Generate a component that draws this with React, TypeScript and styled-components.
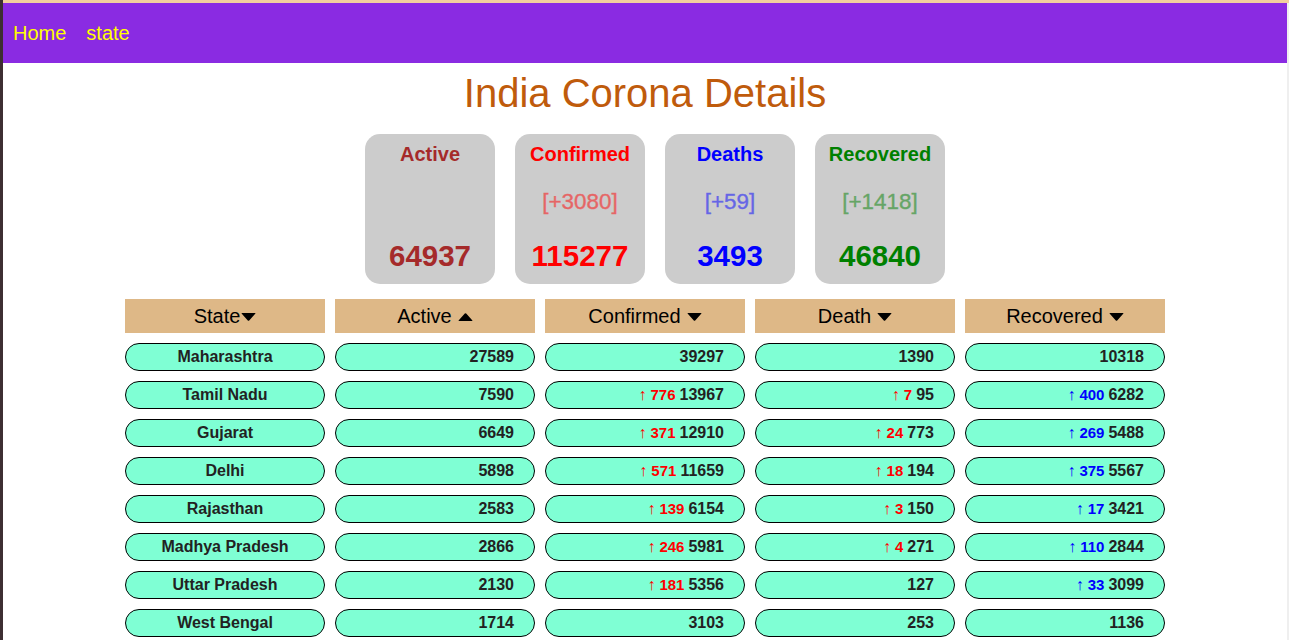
import React from "react";
import styled, { createGlobalStyle } from "styled-components";

const GlobalStyle = createGlobalStyle`
  html, body {
    margin: 0;
    padding: 0;
    overflow: hidden;
    background: #fff;
  }
  body {
    font-family: "Liberation Sans", Arial, sans-serif;
  }
`;

const Frame = styled.div`
  display: flex;
  height: 100vh;
`;

const LeftEdge = styled.div`
  width: 3px;
  background: #3d2e32;
`;

const Window = styled.div`
  flex: 1;
  display: flex;
  flex-direction: column;
`;

const TopEdge = styled.div`
  height: 3px;
  background: #f2cf9e;
`;

const WindowBody = styled.div`
  flex: 1;
  display: flex;
  min-height: 0;
`;

const RightEdge = styled.div`
  width: 2px;
  background: #efefef;
`;

const Main = styled.div`
  flex: 1;
  min-width: 0;
`;

const Nav = styled.nav`
  height: 60px;
  background: #8a2be2;
  display: flex;
  align-items: center;
  gap: 20px;
  padding-left: 10px;
`;

const NavLink = styled.a`
  color: #ffff00;
  font-size: 20px;
  text-decoration: none;
  cursor: pointer;
`;

const Title = styled.h1`
  margin: 0;
  text-align: center;
  font-size: 40px;
  font-weight: normal;
  line-height: 60px;
  color: #bf5b0c;
`;

const CardRow = styled.div`
  display: flex;
  justify-content: center;
  padding-top: 11px;
`;

const Card = styled.div`
  width: 130px;
  height: 150px;
  margin-left: 20px;
  box-sizing: border-box;
  background: #cccccc;
  border-radius: 15px;
  padding-top: 8px;
  display: flex;
  flex-direction: column;
  align-items: center;
  color: ${(p: { $color: string }) => p.$color};
`;

const CardTitle = styled.div`
  font-size: 20px;
  font-weight: bold;
  line-height: 24px;
`;

const CardDelta = styled.div`
  margin-top: 24px;
  height: 24px;
  font-size: 22.4px;
  line-height: 24px;
  opacity: 0.5;
  -webkit-text-stroke: 0.4px currentColor;
`;

const CardNumber = styled.div`
  margin-top: 25px;
  font-size: 29.5px;
  font-weight: bold;
  line-height: 34px;
`;

const Table = styled.div`
  display: grid;
  grid-template-columns: repeat(5, 200px);
  column-gap: 10px;
  row-gap: 10px;
  justify-content: center;
  margin-top: 15px;
`;

const HeadCell = styled.div`
  height: 34px;
  background: #deb887;
  display: flex;
  align-items: center;
  justify-content: center;
  font-size: 20px;
  color: #000;
`;

const Caret = styled.svg<{ $gap: boolean }>`
  width: 15px;
  height: 8px;
  margin-left: ${(p) => (p.$gap ? "6px" : "1px")};
  margin-top: 2px;
`;

const Pill = styled.div<{ $align: "center" | "right" }>`
  height: 28px;
  box-sizing: border-box;
  border: 1px solid #000;
  border-radius: 14px;
  background: #7fffd4;
  display: flex;
  align-items: center;
  justify-content: ${(p) => (p.$align === "center" ? "center" : "flex-end")};
  padding-right: ${(p) => (p.$align === "center" ? "0" : "20px")};
  font-size: 16px;
  font-weight: bold;
  color: #222;
  white-space: pre;
`;

const Delta = styled.span<{ $color: string }>`
  color: ${(p) => p.$color};
  font-size: 15px;
  font-weight: bold;
  margin-right: 4px;
`;

const Arrow = styled.span`
  font-weight: normal;
  font-size: 16px;
  margin-right: 4px;
`;

const CaretIcon = ({ up, gap }: { up?: boolean; gap: boolean }) => (
  <Caret $gap={gap} viewBox="0 0 15 8">
    {up ? (
      <path d="M1 8 H14 Q15 8 14.2 7.2 L8.2 0.6 Q7.5 0 6.8 0.6 L0.8 7.2 Q0 8 1 8 Z" fill="#000" />
    ) : (
      <path d="M1 0 H14 Q15 0 14.2 0.8 L8.2 7.4 Q7.5 8 6.8 7.4 L0.8 0.8 Q0 0 1 0 Z" fill="#000" />
    )}
  </Caret>
);

type Cell = [number, number?];

interface Row {
  state: string;
  active: number;
  confirmed: Cell;
  deaths: Cell;
  recovered: Cell;
}

const rows: Row[] = [
  { state: "Maharashtra", active: 27589, confirmed: [39297], deaths: [1390], recovered: [10318] },
  { state: "Tamil Nadu", active: 7590, confirmed: [13967, 776], deaths: [95, 7], recovered: [6282, 400] },
  { state: "Gujarat", active: 6649, confirmed: [12910, 371], deaths: [773, 24], recovered: [5488, 269] },
  { state: "Delhi", active: 5898, confirmed: [11659, 571], deaths: [194, 18], recovered: [5567, 375] },
  { state: "Rajasthan", active: 2583, confirmed: [6154, 139], deaths: [150, 3], recovered: [3421, 17] },
  { state: "Madhya Pradesh", active: 2866, confirmed: [5981, 246], deaths: [271, 4], recovered: [2844, 110] },
  { state: "Uttar Pradesh", active: 2130, confirmed: [5356, 181], deaths: [127], recovered: [3099, 33] },
  { state: "West Bengal", active: 1714, confirmed: [3103], deaths: [253], recovered: [1136] },
];

const summary = [
  { title: "Active", color: "#a52a2a", delta: "", total: 64937 },
  { title: "Confirmed", color: "#ff0000", delta: "[+3080]", total: 115277 },
  { title: "Deaths", color: "#0000ff", delta: "[+59]", total: 3493 },
  { title: "Recovered", color: "#008000", delta: "[+1418]", total: 46840 },
];

const NumberCell = ({ cell, color }: { cell: Cell; color: string }) => (
  <Pill $align="right">
    {cell[1] !== undefined && (
      <Delta $color={color}>
        <Arrow>↑</Arrow>
        {cell[1]}
      </Delta>
    )}
    {cell[0]}
  </Pill>
);

const App: React.FC = () => {
  return (
    <>
      <GlobalStyle />
      <Frame>
        <LeftEdge />
        <Window>
          <TopEdge />
          <WindowBody>
            <Main>
              <Nav>
                <NavLink>Home</NavLink>
                <NavLink>state</NavLink>
              </Nav>

              <Title>India Corona Details</Title>

              <CardRow>
                {summary.map((s) => (
                  <Card key={s.title} $color={s.color}>
                    <CardTitle>{s.title}</CardTitle>
                    <CardDelta>{s.delta}</CardDelta>
                    <CardNumber>{s.total}</CardNumber>
                  </Card>
                ))}
              </CardRow>

              <Table>
                <HeadCell>
                  State<CaretIcon gap={false} />
                </HeadCell>
                <HeadCell>
                  Active<CaretIcon up gap />
                </HeadCell>
                <HeadCell>
                  Confirmed<CaretIcon gap />
                </HeadCell>
                <HeadCell>
                  Death<CaretIcon gap />
                </HeadCell>
                <HeadCell>
                  Recovered<CaretIcon gap />
                </HeadCell>

                {rows.map((r) => (
                  <React.Fragment key={r.state}>
                    <Pill $align="center">{r.state}</Pill>
                    <Pill $align="right">{r.active}</Pill>
                    <NumberCell cell={r.confirmed} color="#ff0000" />
                    <NumberCell cell={r.deaths} color="#ff0000" />
                    <NumberCell cell={r.recovered} color="#0000ff" />
                  </React.Fragment>
                ))}
              </Table>
            </Main>
            <RightEdge />
          </WindowBody>
        </Window>
      </Frame>
    </>
  );
};

export default App;
